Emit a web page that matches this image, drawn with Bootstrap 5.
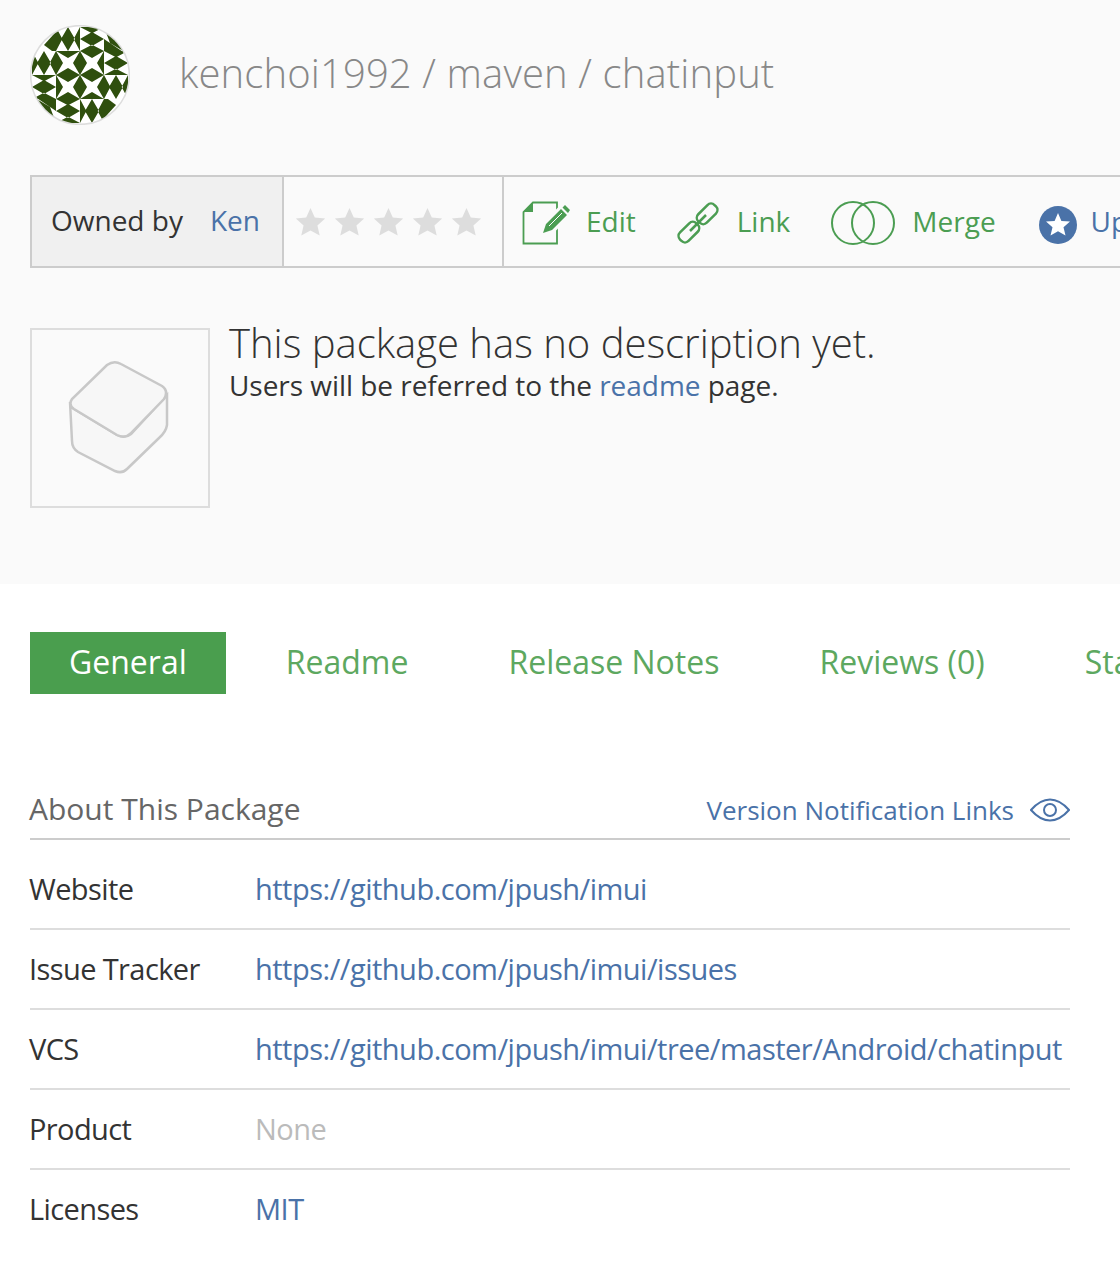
<!DOCTYPE html>
<html lang="en">
<head>
<meta charset="utf-8">
<title>chatinput</title>
<link href="https://cdn.jsdelivr.net/npm/bootstrap@5.3.0/dist/css/bootstrap.min.css" rel="stylesheet">
<style>
html,body{overflow:hidden;height:1268px}
body{font-family:"Open Sans","Liberation Sans",sans-serif;color:#333;background:#fff}
.pk-head{background:#fafafa;height:584px;padding:25px 0 0 30px;overflow:hidden}
.pk-title{margin:-4px 0 0 49px;font-size:40px;font-weight:300;color:#888;letter-spacing:.13px;white-space:nowrap}
.pk-avatar{width:100px;height:100px;flex:none}
.pk-bar{margin-top:50px;height:93px;border:2px solid #ccc;border-right:0;white-space:nowrap;overflow:hidden}
.pk-owner{width:252px;background:#f0f0f0;border-right:2px solid #ccc;font-size:28px;color:#333;padding:0 0 4px 19px;flex:none}
.pk-owner a{margin-left:27px}
.pk-stars{width:220px;border-right:2px solid #ccc;flex:none;padding-left:8px;gap:2px}
.pk-acts{padding:0 0 2px 18px}
.pk-act{font-size:28px;color:#4b9d52;text-decoration:none;gap:17px}
.pk-act svg{margin:2px 0 -2px}
.pk-act+.pk-act{margin-left:40px}
.pk-act-edit{gap:16px}
.pk-act.pk-act-merge{margin-left:41px}
.pk-blue{color:#4a72a8;text-decoration:none}
.pk-up{color:#4a72a8;gap:14px}
.pk-act.pk-up{margin-left:43px}
.pk-act.pk-up svg{margin:4px 0 -4px}
.pk-box{width:180px;height:180px;border:2px solid #ddd;flex:none}
.pk-box svg{margin:0 2px 3px 0}
.pk-desc{margin-top:60px}
.pk-desc-text{margin-left:19px}
.pk-desc h2{font-size:40px;font-weight:300;color:#333;margin:-1px 0 0;line-height:32px}
.pk-desc p{font-size:28px;margin:8px 0 0;line-height:36px;letter-spacing:-.04px}
.pk-tabs{margin:48px 0 0 30px;gap:20px;flex-wrap:nowrap;white-space:nowrap;overflow:hidden}
.pk-tabs .nav-link{font-size:32px;line-height:60px;height:62px;padding:0 40px;color:#5da860;border-radius:0}
.pk-tabs .nav-link.active{background:#4a9e4e;color:#fff;padding:0 39px}
.pk-about{margin:0 50px 0 30px;padding-top:91px}
.pk-about-h{border-bottom:2px solid #ccc;height:55px;padding-bottom:3px}
.pk-about-h h3{font-size:30px;font-weight:400;color:#666;margin:-2px 0 0 -1px}
.pk-about-h a{font-size:26px;gap:16px}
.pk-rows{padding-top:10px}
.pk-row{height:80px;border-bottom:2px solid #ddd;font-size:29px;letter-spacing:-.5px;margin:0}
.pk-row:last-child{border-bottom:0;height:78px}
.pk-key{width:226px;flex:none;color:#333;padding:0;margin-left:-1px;letter-spacing:-.6px}
.pk-val{padding:0;white-space:nowrap}
.pk-none{color:#bbb}
</style>
</head>
<body>
<header class="pk-head">
  <div class="d-flex align-items-center">
    <svg class="pk-avatar" viewBox="30 30 300 300" aria-label="avatar">
      <defs>
        <clipPath id="cc"><circle cx="180" cy="180" r="146"/></clipPath>
        <path id="tv" d="M36 0 57 36 36 72 15 36Z M0 0 19 36 0 72Z M72 0 53 36 72 72Z"/>
        <path id="th" d="M0 36 36 15 72 36 36 57Z M0 0H72L36 19Z M0 72H72L36 53Z"/>
        <path id="ts" d="M0 0 21 36 0 72Z M72 0 51 36 72 72Z M0 0H72L36 21Z M0 72H72L36 51Z"/>
      </defs>
      <circle cx="180" cy="180" r="148" fill="#fff" stroke="#ddd" stroke-width="5"/>
      <g clip-path="url(#cc)" fill="#2f4f0e">
        <use href="#tv" x="108" y="36"/>
        <use href="#th" x="180" y="36"/>
        <use href="#tv" x="36" y="108"/>
        <use href="#ts" x="108" y="108"/>
        <use href="#ts" x="180" y="108"/>
        <use href="#th" x="252" y="108"/>
        <use href="#th" x="36" y="180"/>
        <use href="#ts" x="108" y="180"/>
        <use href="#ts" x="180" y="180"/>
        <use href="#tv" x="252" y="180"/>
        <use href="#th" x="108" y="252"/>
        <use href="#tv" x="180" y="252"/>
        <path d="M108 50 72 90 96 108H108Z"/>
        <path d="M252 72 305 108H252Z M258 52 296 72 310 108 270 84Z"/>
        <path d="M108 288 55 252H108Z M102 308 64 288 50 252 90 276Z"/>
        <path d="M252 310 288 270 264 252H252Z"/>
      </g>
    </svg>
    <h1 class="pk-title">kenchoi1992 / maven / chatinput</h1>
  </div>
  <div class="pk-bar d-flex align-items-stretch">
    <div class="pk-owner d-flex align-items-center">Owned by <a class="pk-blue" href="#">Ken</a></div>
    <div class="pk-stars d-flex align-items-center">
      <svg width="37" height="32" viewBox="0 0 24 24" fill="#ddd"><path d="M12 1.500 15.200 8.600 23 9.400 17.200 14.600 18.900 22.200 12 18.300 5.100 22.200 6.800 14.600 1 9.400 8.800 8.600Z"/></svg>
      <svg width="37" height="32" viewBox="0 0 24 24" fill="#ddd"><path d="M12 1.500 15.200 8.600 23 9.400 17.200 14.600 18.900 22.200 12 18.300 5.100 22.200 6.800 14.600 1 9.400 8.800 8.600Z"/></svg>
      <svg width="37" height="32" viewBox="0 0 24 24" fill="#ddd"><path d="M12 1.500 15.200 8.600 23 9.400 17.200 14.600 18.900 22.200 12 18.300 5.100 22.200 6.800 14.600 1 9.400 8.800 8.600Z"/></svg>
      <svg width="37" height="32" viewBox="0 0 24 24" fill="#ddd"><path d="M12 1.500 15.200 8.600 23 9.400 17.200 14.600 18.900 22.200 12 18.300 5.100 22.200 6.800 14.600 1 9.400 8.800 8.600Z"/></svg>
      <svg width="37" height="32" viewBox="0 0 24 24" fill="#ddd"><path d="M12 1.500 15.200 8.600 23 9.400 17.200 14.600 18.900 22.200 12 18.300 5.100 22.200 6.800 14.600 1 9.400 8.800 8.600Z"/></svg>
    </div>
    <div class="pk-acts d-flex align-items-center">
      <a class="pk-act pk-act-edit d-flex align-items-center" href="#">
        <svg width="48" height="44" viewBox="0 0 48 44"><path d="M11 1.500H35V42.500H1.500V11Z" fill="none" stroke="#4b9d52" stroke-width="1.800"/><path d="M1.500 11 11 1.500V11Z" fill="#4b9d52"/><path d="M21 32 24 22 38 8 45 15 31 29Z" fill="#fafafa" stroke="#fafafa" stroke-width="5"/><path d="M21 32 24 23 39 8 45 14 30 29Z M40.500 6.500 43 4 48 9 46 12Z" fill="#4b9d52"/><path d="M27 25 40 12" stroke="#fff" stroke-width="1"/></svg>
        Edit</a>
      <a class="pk-act d-flex align-items-center" href="#">
        <svg width="44" height="44" viewBox="0 0 44 44" fill="none" stroke="#4b9d52" stroke-width="2.500"><rect x="-6" y="-6" width="23" height="12" rx="5" transform="translate(9 35) rotate(-45)"/><rect x="-17" y="-6" width="23" height="12" rx="5" transform="translate(35 9) rotate(-45)"/><path d="M14 30 30 14"/></svg>
        Link</a>
      <a class="pk-act pk-act-merge d-flex align-items-center" href="#">
        <svg width="64" height="44" viewBox="0 0 64 44" fill="none" stroke="#4b9d52" stroke-width="2"><circle cx="22" cy="22" r="21"/><circle cx="42" cy="22" r="21"/></svg>
        Merge</a>
      <a class="pk-act pk-up d-flex align-items-center" href="#">
        <svg width="38" height="38" viewBox="0 0 38 38"><circle cx="19" cy="19" r="19" fill="#4a72a8"/><path d="M19 7 22.400 14.900 31 15.600 24.500 21.200 26.500 29.600 19 25.200 11.500 29.600 13.500 21.200 7 15.600 15.600 14.900Z" fill="#fff"/></svg>
        Upvote</a>
    </div>
  </div>
  <div class="pk-desc d-flex">
    <div class="pk-box d-flex align-items-center justify-content-center">
      <svg width="104" height="116" viewBox="0 0 104 116" fill="#f7f7f7" stroke="#c8c8c8" stroke-width="2.500"><path d="M3 43 5 82Q5 89 11 93L48 112Q55 115 60 110L92 79Q99 73 100 66V36L64 75Q58 80 50 76L7 50Q3 48 3 43Z"/><path d="M7 50Q1 46 5 40L40 6Q47 1 54 5L95 27Q102 32 97 40L64 74Q58 80 50 76Z"/></svg>
    </div>
    <div class="pk-desc-text">
      <h2>This package has no description yet.</h2>
      <p>Users will be referred to the <a class="pk-blue" href="#">readme</a> page.</p>
    </div>
  </div>
</header>
<main>
  <ul class="nav pk-tabs">
    <li class="nav-item"><a class="nav-link active" href="#">General</a></li>
    <li class="nav-item"><a class="nav-link" href="#">Readme</a></li>
    <li class="nav-item"><a class="nav-link" href="#">Release Notes</a></li>
    <li class="nav-item"><a class="nav-link" href="#">Reviews (0)</a></li>
    <li class="nav-item"><a class="nav-link" href="#">Stats</a></li>
  </ul>
  <section class="pk-about">
    <div class="pk-about-h d-flex justify-content-between align-items-center">
      <h3>About This Package</h3>
      <a class="pk-blue d-flex align-items-center" href="#">Version Notification Links
        <svg width="40" height="24" viewBox="0 0 40 24" fill="none" stroke="#4a72a8" stroke-width="2"><path d="M1 12C8 4 14 1.500 20 1.500S32 4 39 12C32 20 26 22.500 20 22.500S8 20 1 12Z"/><circle cx="20" cy="12" r="6"/></svg>
      </a>
    </div>
    <div class="pk-rows">
      <div class="row pk-row align-items-center"><div class="pk-key">Website</div><div class="pk-val col"><a class="pk-blue" href="#">https://github.com/jpush/imui</a></div></div>
      <div class="row pk-row align-items-center"><div class="pk-key">Issue Tracker</div><div class="pk-val col"><a class="pk-blue" href="#">https://github.com/jpush/imui/issues</a></div></div>
      <div class="row pk-row align-items-center"><div class="pk-key">VCS</div><div class="pk-val col"><a class="pk-blue" href="#">https://github.com/jpush/imui/tree/master/Android/chatinput</a></div></div>
      <div class="row pk-row align-items-center"><div class="pk-key">Product</div><div class="pk-val col pk-none">None</div></div>
      <div class="row pk-row align-items-center"><div class="pk-key">Licenses</div><div class="pk-val col"><a class="pk-blue" href="#">MIT</a></div></div>
    </div>
  </section>
</main>
<script src="https://cdn.jsdelivr.net/npm/bootstrap@5.3.0/dist/js/bootstrap.bundle.min.js"></script>
</body>
</html>
